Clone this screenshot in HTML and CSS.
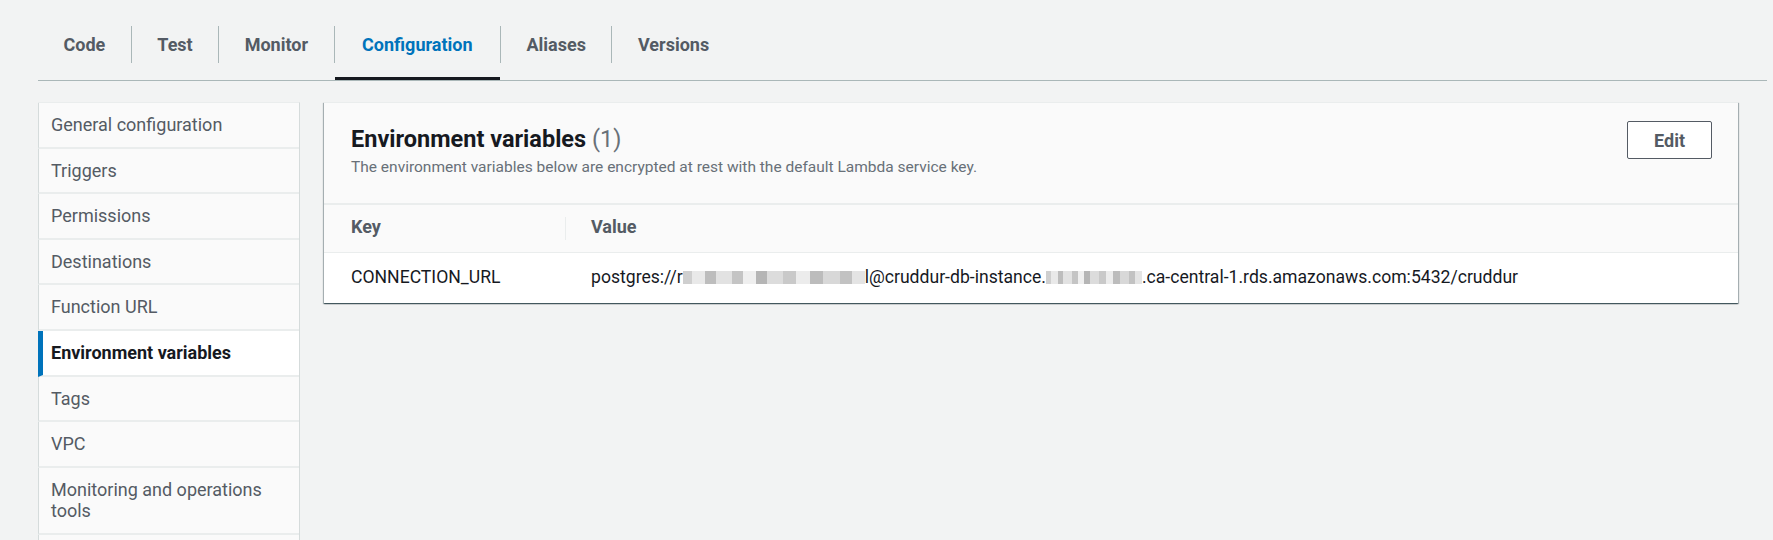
FILE: index.html
```html
<!DOCTYPE html>
<html lang="en">
<head>
<meta charset="utf-8">
<title>Lambda - Configuration</title>
<link rel="stylesheet" href="styles.css">
</head>
<body>
<div class="page">
  <nav class="tabs">
    <a class="tab">Code</a><span class="sep"></span>
    <a class="tab">Test</a><span class="sep"></span>
    <a class="tab">Monitor</a><span class="sep"></span>
    <a class="tab active">Configuration</a><span class="sep"></span>
    <a class="tab">Aliases</a><span class="sep"></span>
    <a class="tab">Versions</a>
  </nav>
  <div class="layout">
    <ul class="sidenav">
      <li>General configuration</li>
      <li>Triggers</li>
      <li>Permissions</li>
      <li>Destinations</li>
      <li>Function URL</li>
      <li class="active">Environment variables</li>
      <li>Tags</li>
      <li>VPC</li>
      <li>Monitoring and operations tools</li>
      <li>Concurrency</li>
      <li>Asynchronous invocation</li>
    </ul>
    <section class="panel">
      <header class="panel-header">
        <div class="titles">
          <h2>Environment variables <span class="count">(1)</span></h2>
          <p>The environment variables below are encrypted at rest with the default Lambda service key.</p>
        </div>
        <button class="btn">Edit</button>
      </header>
      <div class="thead">
        <div class="th key">Key</div>
        <span class="divider"></span>
        <div class="th val">Value</div>
      </div>
      <div class="row">
        <div class="td key">CONNECTION_URL</div>
        <div class="td val">postgres://r<span class="blur blur-user"></span>l@cruddur-db-instance.<span class="blur blur-host"></span>.ca-central-1.rds.amazonaws.com:5432/cruddur</div>
      </div>
    </section>
  </div>
</div>
</body>
</html>
```

FILE: styles.css
```css
html, body {
  margin: 0;
  background: #f2f3f3;
  font-family: Roboto, "Liberation Sans", Arial, sans-serif;
  overflow: hidden;
}

.page {
  padding: 16px 6px 0 38px;
}

/* Tabs */
.tabs {
  display: flex;
  align-items: flex-start;
  border-bottom: 1px solid #aab7b8;
}

.tab {
  padding: 10px 25.5px 17px;
  font-size: 18px;
  font-weight: 700;
  line-height: 37px;
  color: #545b64;
  cursor: pointer;
}

.tab.active {
  color: #0073bb;
  border-bottom: 3px solid #16191f;
  padding: 10px 27.5px 14px;
}

.sep {
  width: 1px;
  height: 37px;
  margin-top: 10px;
  background: #aab7b8;
}

/* Layout */
.layout {
  display: flex;
  align-items: flex-start;
  gap: 24px;
  margin-top: 21px;
}

/* Side navigation */
.sidenav {
  width: 262px;
  box-sizing: border-box;
  margin: 0;
  padding: 0;
  list-style: none;
  border-top: 1px solid #eaeded;
  border-right: 1px solid #d5dbdb;
  flex-shrink: 0;
}

.sidenav li {
  padding: 11px 12px;
  border-left: 1px solid #d5dbdb;
  border-bottom: 2px solid #eaeded;
  background: #fafafa;
  font-size: 18px;
  line-height: 21.6px;
  color: #545b64;
}

.sidenav li.active {
  background: #ffffff;
  border-left: 5px solid #0073bb;
  padding-left: 8px;
  font-weight: 700;
  color: #16191f;
}

/* Panel */
.panel {
  flex: 1;
  margin-right: 29px;
  background: #ffffff;
  box-shadow: 0 1px 1px 0 rgba(0, 28, 36, 0.5), 1px 1px 1px 0 rgba(0, 28, 36, 0.25), -1px 1px 1px 0 rgba(0, 28, 36, 0.25);
  border-top: 1px solid #eaeded;
}

.panel-header {
  display: flex;
  justify-content: space-between;
  align-items: flex-start;
  padding: 18px 26px 25px 27px;
  background: #fafafa;
  border-bottom: 2px solid #eaeded;
}

.panel-header h2 {
  margin: 4px 0 0;
  font-size: 23.5px;
  line-height: 28px;
  font-weight: 700;
  color: #16191f;
}

.panel-header .count {
  font-weight: 400;
  color: #687078;
}

.panel-header p {
  margin: 3px 0 0;
  font-size: 15.5px;
  line-height: 22px;
  color: #687078;
}

.btn {
  height: 38px;
  padding: 0 26px;
  background: #ffffff;
  border: 1px solid #545b64;
  border-radius: 2px;
  font-family: Roboto, "Liberation Sans", Arial, sans-serif;
  font-size: 18px;
  font-weight: 700;
  color: #545b64;
}

/* Table */
.thead {
  display: flex;
  align-items: center;
  background: #fafafa;
  border-bottom: 1px solid #eaeded;
}

.th {
  padding: 11px 0 14px;
  font-size: 18px;
  line-height: 22px;
  font-weight: 700;
  color: #545b64;
}

.key {
  width: 241px;
  box-sizing: border-box;
  padding-left: 27px;
  flex-shrink: 0;
}

.divider {
  width: 1px;
  height: 23px;
  background: #eaeded;
}

.th.val {
  padding-left: 25px;
}

.row {
  display: flex;
}

.td {
  padding: 13px 0 15px;
  font-size: 17.6px;
  line-height: 22px;
  color: #16191f;
}

.td.key {
  padding-left: 27px;
}

.td.val {
  padding-left: 26px;
  white-space: nowrap;
}

.blur {
  display: inline-block;
  height: 13px;
  vertical-align: -1px;
  background:
    linear-gradient(90deg,
      #cfcfcf 0 5%, #e9e9e9 5% 12%, #bdbdbd 12% 18%, #e2e2e2 18% 27%,
      #c4c4c4 27% 33%, #efefef 33% 40%, #b5b5b5 40% 46%, #dcdcdc 46% 55%,
      #c9c9c9 55% 62%, #ececec 62% 70%, #bcbcbc 70% 77%, #d8d8d8 77% 86%,
      #c2c2c2 86% 93%, #e4e4e4 93% 100%);
}

.blur-user {
  width: 182px;
}

.blur-host {
  width: 96px;
}
```
